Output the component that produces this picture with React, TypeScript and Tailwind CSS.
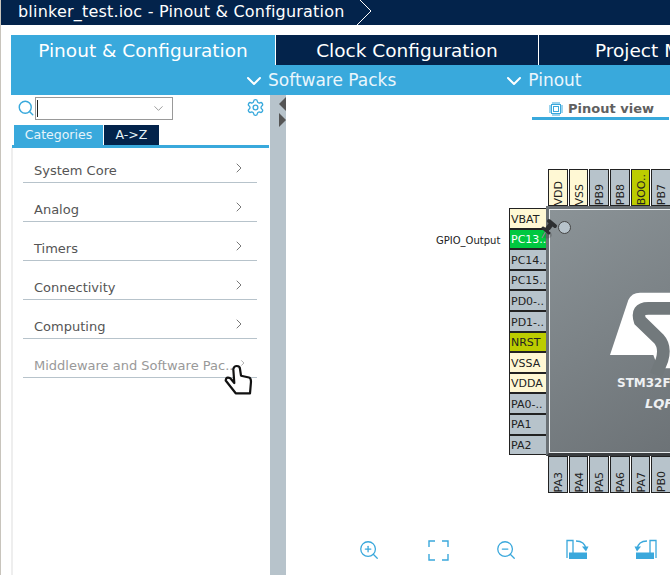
import { ChevronDown, ChevronRight, Search, Settings, ZoomIn, ZoomOut } from 'lucide-react';

type Pin = { name: string; kind?: 'power' | 'green' | 'olive' };

const TOP_PINS: Pin[] = [
  { name: 'VDD', kind: 'power' },
  { name: 'VSS', kind: 'power' },
  { name: 'PB9' },
  { name: 'PB8' },
  { name: 'BOO..', kind: 'olive' },
  { name: 'PB7' },
];

const LEFT_PINS: Pin[] = [
  { name: 'VBAT', kind: 'power' },
  { name: 'PC13..', kind: 'green' },
  { name: 'PC14..' },
  { name: 'PC15..' },
  { name: 'PD0-..' },
  { name: 'PD1-..' },
  { name: 'NRST', kind: 'olive' },
  { name: 'VSSA', kind: 'power' },
  { name: 'VDDA', kind: 'power' },
  { name: 'PA0-..' },
  { name: 'PA1' },
  { name: 'PA2' },
];

const BOTTOM_PINS: Pin[] = ['PA3', 'PA4', 'PA5', 'PA6', 'PA7', 'PB0'].map((name) => ({ name }));

const CATEGORIES = ['System Core', 'Analog', 'Timers', 'Connectivity', 'Computing', 'Middleware and Software Pac...'];

function pinColor(kind?: Pin['kind']) {
  if (kind === 'power') return 'bg-[#fff8d4] text-[#222]';
  if (kind === 'green') return 'bg-[#00c840] text-white';
  if (kind === 'olive') return 'bg-[#bccc00] text-[#222]';
  return 'bg-[#b7c3cb] text-[#222]';
}

function VerticalPin({ pin }: { pin: Pin }) {
  return (
    <div className={`flex h-[37px] w-[19.7px] flex-none flex-col items-center justify-end border border-[#222] pl-[2px] ${pinColor(pin.kind)}`}>
      <span className="py-[2px] text-[11px] leading-[18px] whitespace-nowrap [transform:rotate(180deg)] [writing-mode:vertical-rl]">{pin.name}</span>
    </div>
  );
}

function LeftPin({ pin }: { pin: Pin }) {
  return (
    <div className={`flex h-[20.6px] w-[38px] flex-none items-center overflow-hidden border border-[#222] pt-[3px] pl-[1px] text-[11px] whitespace-nowrap ${pinColor(pin.kind)}`}>
      {pin.name}
    </div>
  );
}

function RotateIcon({ flip }: { flip?: boolean }) {
  return (
    <svg width="24" height="22" viewBox="0 0 24 22" className={flip ? '-scale-x-100' : ''} fill="none" stroke="#3aa8dc" strokeWidth="1.3">
      <path d="M1 19V1.5h6V14" />
      <rect x="3" y="13.5" width="18" height="6.5" fill="#3aa8dc" stroke="none" />
      <path d="M10 2c5 0 9 2 10 8" />
      <path d="M16 7.5l4 5 2.5-5z" fill="#3aa8dc" stroke="none" />
    </svg>
  );
}

function FitIcon() {
  return (
    <svg width="21" height="21" viewBox="0 0 21 21" fill="none" stroke="#3aa8dc" strokeWidth="1.4">
      <path d="M7 1H1v6M14 1h6v6M1 14v6h6M20 14v6h-6" />
    </svg>
  );
}

function ChipIcon() {
  return (
    <svg width="14" height="14" viewBox="0 0 14 14" fill="none" stroke="#3aa8dc">
      <rect x="2.5" y="2.5" width="9" height="9" />
      <rect x="4.5" y="4.5" width="5" height="5" />
      <path d="M4 0v2M6 0v2M8 0v2M10 0v2M4 12v2M6 12v2M8 12v2M10 12v2M0 4h2M0 6h2M0 8h2M0 10h2M12 4h2M12 6h2M12 8h2M12 10h2" />
    </svg>
  );
}

function StLogo() {
  return (
    <svg width="80" height="100" viewBox="0 0 240 300" className="absolute left-[41px] top-[71px]">
      <path fill="#fff" d="M60 225L115 60Q125 38 150 38H300V265H205L190 225Z" />
      <path d="M300 85H175Q138 85 150 122L205 175Q228 200 216 240L198 285" fill="none" stroke="#72797c" strokeWidth="38" />
    </svg>
  );
}

function PushPin() {
  return (
    <svg width="22" height="24" viewBox="0 0 22 24" className="absolute left-[538px] top-[218px]">
      <ellipse cx="9" cy="17" rx="5" ry="3.5" fill="#333" opacity="0.22" />
      <path d="M8 13L4 20" stroke="#8a8f92" strokeWidth="1.2" />
      <path d="M14 5L8 13" stroke="#2d2f31" strokeWidth="5" />
      <path d="M11 3L17 8" stroke="#2d2f31" strokeWidth="4" strokeLinecap="round" />
      <path d="M5 10L11 15" stroke="#2d2f31" strokeWidth="3" strokeLinecap="round" />
    </svg>
  );
}

function HandCursor() {
  return (
    <svg width="32" height="32" viewBox="0 0 32 32" className="absolute left-[222px] top-[364px]">
      <path
        d="M12.3 19L11.3 5Q12 2 14.7 2Q18 2 18 5L19 11.7L27 13.5Q29 14 29 17.7L28 29.3H13.7L3.7 16.5Q4 13.5 6 13.7Q8 14 9 15Z"
        fill="#fff"
        stroke="#111"
        strokeWidth="2.2"
        strokeLinejoin="round"
      />
    </svg>
  );
}

export default function App() {
  return (
    <div className="flex h-[575px] w-[670px] flex-col overflow-hidden border-l border-[#c8c4bc] bg-white font-['DejaVu_Sans',sans-serif]">
      {/* breadcrumb */}
      <div className="flex h-[25px] flex-none items-center bg-[#03234b] pl-[17px] text-[16px] tracking-[0.2px] text-white">
        <span className="-translate-y-px">blinker_test.ioc - Pinout &amp; Configuration</span>
        <svg width="16" height="25" viewBox="0 0 16 25" className="ml-[11px]" fill="none" stroke="#fff" strokeWidth="1">
          <path d="M4 0L15 11L1 25" />
        </svg>
      </div>

      {/* main tabs */}
      <div className="mt-[10px] ml-[10px] flex h-[30px] flex-none text-[18.5px] text-white">
        <div className="flex w-[264px] flex-none items-center justify-center bg-[#39a9dc] pt-[2px]">Pinout &amp; Configuration</div>
        <div className="flex w-[263px] flex-none items-center justify-center border-l border-white bg-[#03234b] pt-[2px]">Clock Configuration</div>
        <div className="flex flex-1 items-center overflow-hidden border-l border-white bg-[#03234b] pt-[2px] pl-[56px] whitespace-nowrap">Project Manager</div>
      </div>
      <div className="ml-[10px] flex h-[30px] flex-none items-center bg-[#39a9dc] pt-[2px] text-[17px] text-[#eaf6fc]">
        <ChevronDown size={24} strokeWidth={2} className="ml-[231px] text-white" />
        <span className="ml-[2px]">Software Packs</span>
        <ChevronDown size={24} strokeWidth={2} className="ml-[106px] text-white" />
        <span className="ml-[2px]">Pinout</span>
      </div>

      <div className="relative flex min-h-0 flex-1">
        {/* left panel */}
        <div className="ml-[10px] flex w-[259px] flex-none flex-col">
          <div className="flex h-[30px] flex-none items-start pt-[2px]">
            <Search size={18} strokeWidth={1.9} className="mt-[2px] ml-[6px] text-[#39a9dc]" />
            <div className="flex h-[23px] w-[138px] items-center justify-between border border-[#999] pr-[6px]">
              <span className="ml-[1px] h-[17px] w-px bg-[#222]" />
              <ChevronDown size={15} strokeWidth={1.3} className="text-[#888]" />
            </div>
            <Settings size={19} strokeWidth={1.7} className="mt-[1px] ml-[73px] text-[#39a9dc]" />
          </div>
          <div className="ml-[3px] flex h-[20px] flex-none text-[12.5px] text-[#e6f4fa]">
            <div className="flex w-[89px] items-center justify-center bg-[#39a9dc]">Categories</div>
            <div className="ml-px flex w-[55px] items-center justify-center bg-[#03234b]">A-&gt;Z</div>
          </div>
          <div className="ml-px h-[3px] w-[257px] flex-none bg-[#39a9dc]" />
          <div className="flex-1 border-l-[2px] border-[#eeeeee] pt-[5px] pr-[13px] pl-[10px]">
            {CATEGORIES.map((category, i) => (
              <div
                key={category}
                className={`mb-[9px] flex h-[30px] items-center justify-between border-b border-[#b7c3cb] pt-[6px] pl-[11px] text-[13px] whitespace-nowrap ${i === 5 ? 'text-[#999]' : 'text-[#555]'}`}
              >
                <span>{category}</span>
                <ChevronRight size={16} strokeWidth={1.2} className="mr-[10px] -translate-y-[3px] text-[#555]" />
              </div>
            ))}
          </div>
        </div>

        {/* splitter */}
        <div className="flex w-[16px] flex-none flex-col items-end bg-[#b7c3cb] pt-[2px]">
          <div className="h-0 w-0 border-y-[7px] border-r-[7px] border-y-transparent border-r-[#555]" />
          <div className="mt-[2px] h-0 w-0 border-y-[7px] border-l-[7px] border-y-transparent border-l-[#555]" />
        </div>

        {/* pinout canvas */}
        <div className="relative min-w-0 flex-1 overflow-hidden">
          <div className="absolute right-[1px] top-0 flex h-[25px] w-[137px] items-center justify-center gap-[5px] border-b-[3px] border-[#39a9dc] pt-[5px] pl-[2px] text-[13px] font-bold text-[#606060]">
            <ChipIcon />
            <span>Pinout view</span>
          </div>

          <div className="absolute left-[223px] top-[74px] flex flex-col">
            <div className="ml-[39px] flex gap-[1px]">
              {TOP_PINS.map((pin) => (
                <VerticalPin key={pin.name} pin={pin} />
              ))}
            </div>
            <div className="flex">
              <div className="flex h-[250px] flex-none flex-col pt-[2px]">
                {LEFT_PINS.map((pin) => (
                  <LeftPin key={pin.name} pin={pin} />
                ))}
              </div>
              <div className="relative -ml-px h-[250px] w-[400px] flex-none border-[3px] border-[#6a7074] border-b-[#3a3d40] bg-gradient-to-br from-[#8b9397] to-[#5d6266] shadow-[inset_1px_1px_0_#e8ecee,inset_0_-1px_0_#e8ecee]">
                <div className="absolute left-[9px] top-[12px] h-[13px] w-[13px] rounded-full border border-[#444] bg-[#b7c3cb]" />
                <StLogo />
                <div className="absolute left-[68px] top-[165px] text-[12px] font-bold whitespace-nowrap text-[#eef0f2]">STM32F103C8Tx</div>
                <div className="absolute left-[96px] top-[185px] text-[13px] font-bold italic text-[#eef0f2]">LQFP48</div>
              </div>
            </div>
            <div className="ml-[39px] flex gap-[1px]">
              {BOTTOM_PINS.map((pin) => (
                <VerticalPin key={pin.name} pin={pin} />
              ))}
            </div>
          </div>

          <div className="absolute left-[150px] top-[138px] text-[10px] text-[#222]">GPIO_Output</div>

          <div className="absolute bottom-[13px] left-[72px] flex h-[24px] items-center text-[#3aa8dc]">
            <ZoomIn size={22} strokeWidth={1.4} />
            <div className="ml-[48px]"><FitIcon /></div>
            <div className="ml-[46px]"><ZoomOut size={22} strokeWidth={1.4} /></div>
            <div className="ml-[49px]"><RotateIcon /></div>
            <div className="ml-[43px]"><RotateIcon flip /></div>
          </div>
        </div>

        <div className="pointer-events-none absolute left-[-1px] top-[-95px] h-0 w-0">
          <PushPin />
          <HandCursor />
        </div>
      </div>
    </div>
  );
}
